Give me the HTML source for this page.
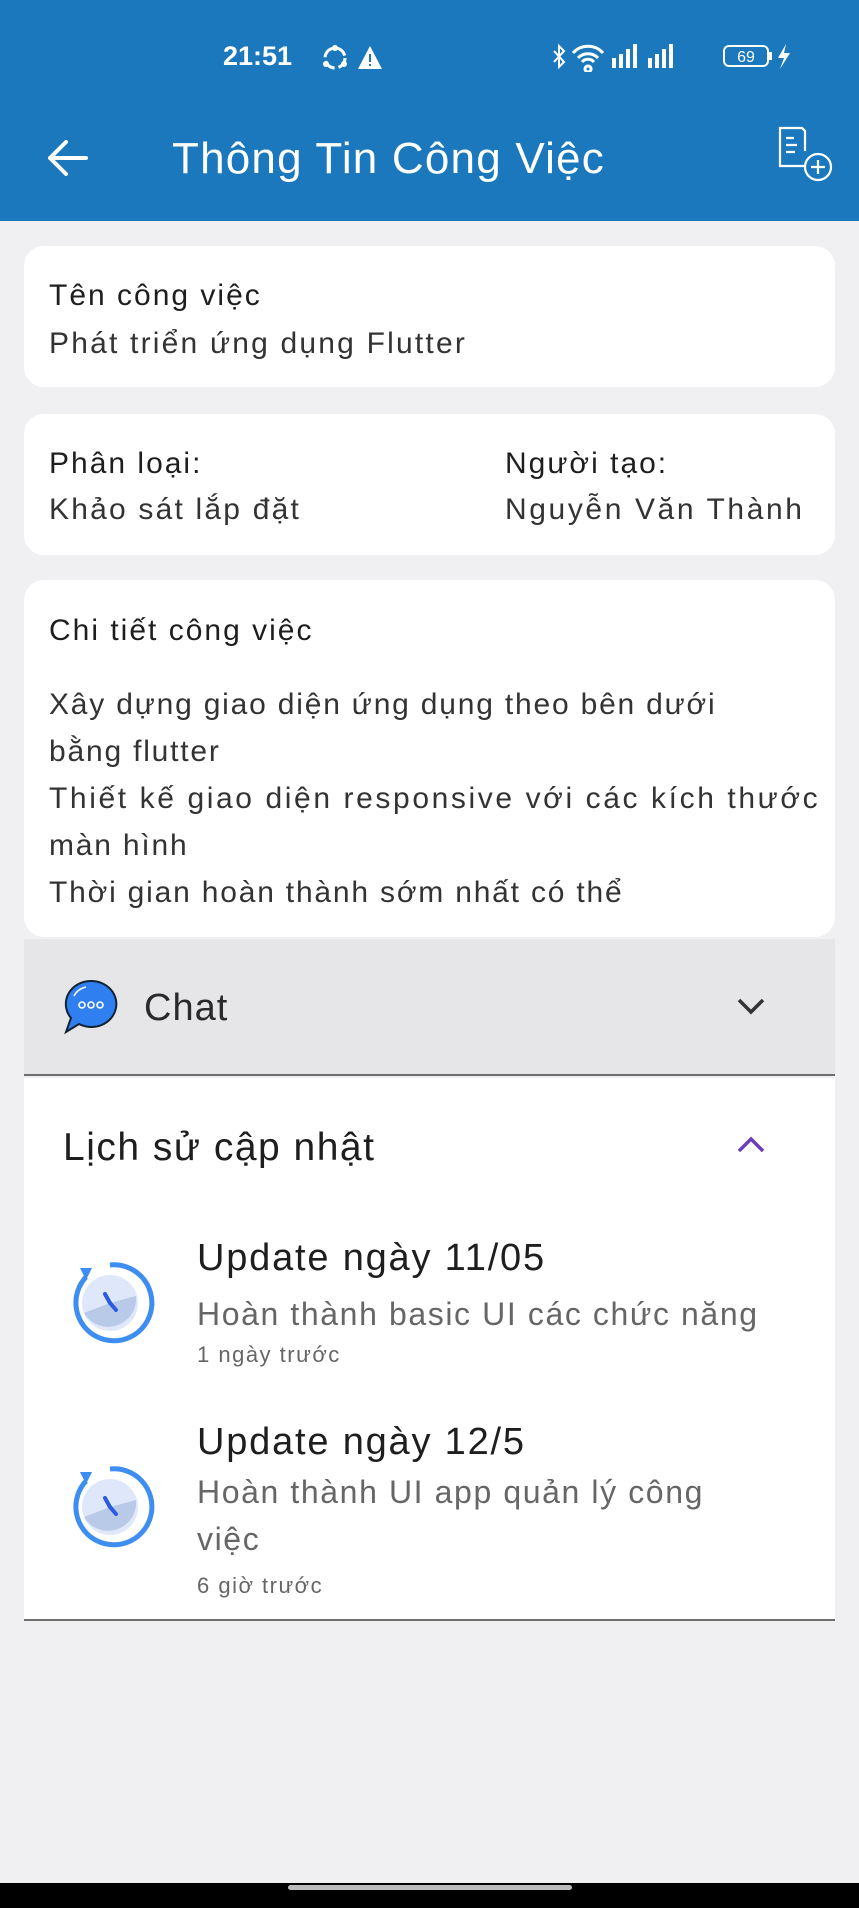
<!DOCTYPE html>
<html><head><meta charset="utf-8"><style>
*{margin:0;padding:0;box-sizing:border-box}
body{width:859px;height:1908px;background:#f0f0f3;font-family:"Liberation Sans","DejaVu Sans",sans-serif;position:relative;overflow:hidden;color:#1e1e1e}
.abs{position:absolute}
.bar{left:0;top:0;width:859px;height:221px;background:#1b78bd}
.card{position:absolute;left:24px;width:811px;background:#fff;border-radius:20px}
.t{position:absolute;white-space:nowrap}
.h{font-size:30px;color:#1e1e1e;letter-spacing:2px}
.v{font-size:30px;color:#333;letter-spacing:2.2px}
</style></head><body>
<div class="abs bar"></div>
<div class="t" style="left:223px;top:41px;color:#fff;font-size:27px;font-weight:bold">21:51</div>
<svg class="abs" style="left:318px;top:43px" width="70" height="30"><circle cx="17" cy="15" r="10" fill="none" stroke="#fff" stroke-width="3" stroke-dasharray="12 4"/><circle cx="17" cy="5" r="3" fill="#fff"/><circle cx="8" cy="21" r="3" fill="#fff"/><circle cx="26" cy="21" r="3" fill="#fff"/><path d="M52 3 L64 26 L40 26 Z" fill="#fff"/><rect x="51" y="11" width="2" height="8" fill="#1b78bd"/><rect x="51" y="21" width="2" height="2" fill="#1b78bd"/></svg>
<svg class="abs" style="left:550px;top:42px" width="250" height="30"><path d="M4 9 L14 20 L9 25 L9 4 L14 9 L4 20" fill="none" stroke="#fff" stroke-width="2"/><path d="M38 24 a3 3 0 1 0 .1 0 M28 16 a14 14 0 0 1 20 0 M23 11 a20 20 0 0 1 30 0 M32 20 a8 8 0 0 1 12 0" fill="none" stroke="#fff" stroke-width="3"/><rect x="62" y="16" width="4" height="10" fill="#fff"/><rect x="69" y="12" width="4" height="14" fill="#fff"/><rect x="76" y="7" width="4" height="19" fill="#fff"/><rect x="83" y="2" width="4" height="24" fill="#fff"/><rect x="98" y="16" width="4" height="10" fill="#fff"/><rect x="105" y="12" width="4" height="14" fill="#fff"/><rect x="112" y="7" width="4" height="19" fill="#fff"/><rect x="119" y="2" width="4" height="24" fill="#fff"/><rect x="174" y="4" width="44" height="20" rx="5" fill="none" stroke="#fff" stroke-width="2"/><rect x="219" y="10" width="3" height="8" fill="#fff"/><text x="196" y="20" fill="#fff" font-size="16" text-anchor="middle" font-family="Liberation Sans">69</text><path d="M236 2 L228 16 L234 16 L230 27 L240 11 L234 11 Z" fill="#fff"/></svg>
<svg class="abs" style="left:44px;top:138px" width="46" height="40"><path d="M42 20 H6 M22 4 L6 20 L22 36" fill="none" stroke="#fff" stroke-width="4" stroke-linecap="round" stroke-linejoin="round"/></svg>
<div class="t" style="left:172px;top:134px;color:#fff;font-size:44px;letter-spacing:1.2px">Thông Tin Công Việc</div>
<svg class="abs" style="left:775px;top:124px" width="62" height="62"><path d="M30 42 H5 V4 H27 L30 7 V27" fill="none" stroke="#fff" stroke-width="2.2"/><path d="M11 14 H19 M11 21 H22 M11 28 H20" stroke="#fff" stroke-width="2.2"/><circle cx="43" cy="43" r="13" fill="none" stroke="#fff" stroke-width="2.2"/><path d="M43 36 V50 M36 43 H50" stroke="#fff" stroke-width="2.2"/></svg>

<div class="card" style="top:246px;height:141px"></div>
<div class="t h" style="left:49px;top:279px">Tên công việc</div>
<div class="t v" style="left:49px;top:327px">Phát triển ứng dụng Flutter</div>

<div class="card" style="top:414px;height:141px"></div>
<div class="t h" style="left:49px;top:447px">Phân loại:</div>
<div class="t v" style="left:49px;top:493px">Khảo sát lắp đặt</div>
<div class="t h" style="left:505px;top:447px">Người tạo:</div>
<div class="t v" style="left:505px;top:493px;letter-spacing:2.6px">Nguyễn Văn Thành</div>

<div class="card" style="top:580px;height:357px"></div>
<div class="t h" style="left:49px;top:614px">Chi tiết công việc</div>
<div class="t v" style="left:49px;top:681px;line-height:47px;white-space:nowrap;letter-spacing:1.8px">Xây dựng giao diện ứng dụng theo bên dưới<br>bằng flutter<br><span style="letter-spacing:2.6px">Thiết kế giao diện responsive với các kích thước</span><br>màn hình<br>Thời gian hoàn thành sớm nhất có thể</div>

<div class="abs" style="left:24px;top:939px;width:811px;height:137px;background:#e6e6e8;border-bottom:2px solid #6e6e6e"></div>
<svg class="abs" style="left:62px;top:978px" width="58" height="58"><path d="M29 3 a25 23 0 1 1 -12 43 L4 54 L9 40 A25 23 0 0 1 29 3Z" fill="#2f7ff0" stroke="#123" stroke-width="2"/><circle cx="20" cy="27" r="3" fill="none" stroke="#fff" stroke-width="1.6"/><circle cx="29" cy="27" r="3" fill="none" stroke="#fff" stroke-width="1.6"/><circle cx="38" cy="27" r="3" fill="none" stroke="#fff" stroke-width="1.6"/><path d="M12 18 a18 16 0 0 1 12 -9" fill="none" stroke="#fff" stroke-width="1.5"/></svg>
<div class="t" style="left:144px;top:987px;font-size:38px;color:#2a2a2a;letter-spacing:1px">Chat</div>
<svg class="abs" style="left:736px;top:996px" width="30" height="22"><path d="M3 4 L15 16 L27 4" fill="none" stroke="#333" stroke-width="3.5"/></svg>

<div class="abs" style="left:24px;top:1078px;width:811px;height:543px;background:#fff;border-bottom:2px solid #6e6e6e"></div>
<div class="t" style="left:63px;top:1126px;font-size:39px;color:#1e1e1e;letter-spacing:1.5px">Lịch sử cập nhật</div>
<svg class="abs" style="left:736px;top:1133px" width="30" height="22"><path d="M3 18 L15 6 L27 18" fill="none" stroke="#6a3fb8" stroke-width="3.5"/></svg>

<svg class="abs" style="left:66px;top:1260px" width="90" height="90"><circle cx="44" cy="43" r="28" fill="#dfe8fb"/><path d="M44 43 L70 36 A28 28 0 0 1 18 53 Z" fill="#b9c9e8"/><path d="M44 43 L39 34" stroke="#2c5ae0" stroke-width="4" stroke-linecap="round"/><path d="M44 43 L50 50" stroke="#2c5ae0" stroke-width="4" stroke-linecap="round"/><path d="M20 17 A38 38 0 1 0 44 5" fill="none" stroke="#3d8ef0" stroke-width="5"/><path d="M14 8 L26 8 L20 20Z" fill="#3d8ef0"/></svg>
<div class="t" style="left:197px;top:1237px;font-size:38px;color:#1e1e1e;letter-spacing:1.8px">Update ngày 11/05</div>
<div class="t" style="left:197px;top:1296px;font-size:32px;color:#666;letter-spacing:1.6px">Hoàn thành basic UI các chức năng</div>
<div class="t" style="left:197px;top:1342px;font-size:22px;color:#666;letter-spacing:1.5px">1 ngày trước</div>

<svg class="abs" style="left:66px;top:1464px" width="90" height="90"><circle cx="44" cy="43" r="28" fill="#dfe8fb"/><path d="M44 43 L70 36 A28 28 0 0 1 18 53 Z" fill="#b9c9e8"/><path d="M44 43 L39 34" stroke="#2c5ae0" stroke-width="4" stroke-linecap="round"/><path d="M44 43 L50 50" stroke="#2c5ae0" stroke-width="4" stroke-linecap="round"/><path d="M20 17 A38 38 0 1 0 44 5" fill="none" stroke="#3d8ef0" stroke-width="5"/><path d="M14 8 L26 8 L20 20Z" fill="#3d8ef0"/></svg>
<div class="t" style="left:197px;top:1421px;font-size:38px;color:#1e1e1e;letter-spacing:1.8px">Update ngày 12/5</div>
<div class="t" style="left:197px;top:1474px;font-size:32px;color:#666;letter-spacing:1.6px">Hoàn thành UI app quản lý công</div>
<div class="t" style="left:197px;top:1521px;font-size:32px;color:#666;letter-spacing:1.6px">việc</div>
<div class="t" style="left:197px;top:1573px;font-size:22px;color:#666;letter-spacing:1.5px">6 giờ trước</div>

<div class="abs" style="left:0;top:1883px;width:859px;height:25px;background:#000"></div>
<div class="abs" style="left:288px;top:1885px;width:284px;height:5px;border-radius:3px;background:#bbb"></div>
</body></html>
